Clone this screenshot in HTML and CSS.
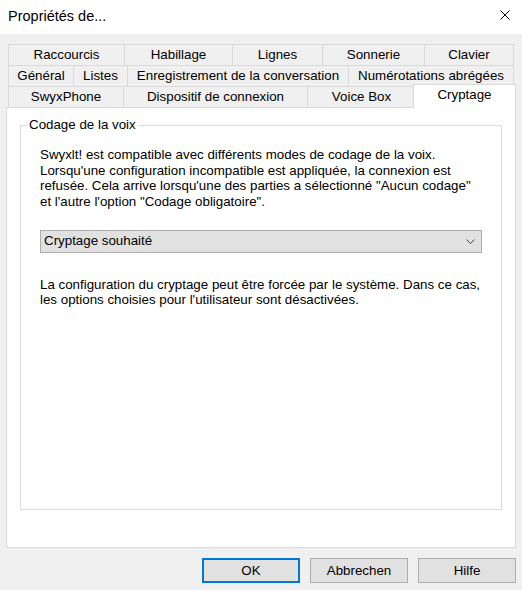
FILE: index.html
```html
<!DOCTYPE html>
<html lang="fr">
<head>
<meta charset="utf-8">
<title>Propriétés de...</title>
<link rel="stylesheet" href="styles.css">
</head>
<body>
<div class="window">
  <div class="titlebar">
    <span class="title">Propriétés de...</span>
    <svg class="close" width="10" height="10" viewBox="0 0 10 10" aria-hidden="true">
      <path d="M0.5 0.5 L9.5 9.5 M9.5 0.5 L0.5 9.5" stroke="#000" stroke-width="1" fill="none"/>
    </svg>
  </div>
  <div class="client">
    <div class="tabs">
      <div class="tab-row row1">
        <div class="tab">Raccourcis</div>
        <div class="tab">Habillage</div>
        <div class="tab">Lignes</div>
        <div class="tab">Sonnerie</div>
        <div class="tab last">Clavier</div>
      </div>
      <div class="tab-row row2">
        <div class="tab">Général</div>
        <div class="tab">Listes</div>
        <div class="tab">Enregistrement de la conversation</div>
        <div class="tab last">Numérotations abrégées</div>
      </div>
      <div class="tab-row row3">
        <div class="tab">SwyxPhone</div>
        <div class="tab">Dispositif de connexion</div>
        <div class="tab">Voice Box</div>
        <div class="tab last selected">Cryptage</div>
      </div>
    </div>
    <div class="panel">
      <fieldset class="group">
        <legend>Codage de la voix</legend>
        <div class="group-body">
          <p class="text">Swyxlt! est compatible avec différents modes de codage de la voix.<br>Lorsqu'une configuration incompatible est appliquée, la connexion est<br>refusée. Cela arrive lorsqu'une des parties a sélectionné "Aucun codage"<br>et l'autre l'option "Codage obligatoire".</p>
          <div class="combo">
            <span class="combo-value">Cryptage souhaité</span>
            <svg class="chevron" width="9" height="5" viewBox="0 0 9 5" aria-hidden="true">
              <path d="M0.5 0.5 L4.5 4.5 L8.5 0.5" stroke="#444" stroke-width="1" fill="none"/>
            </svg>
          </div>
          <p class="text note">La configuration du cryptage peut être forcée par le système. Dans ce cas,<br>les options choisies pour l'utilisateur sont désactivées.</p>
        </div>
      </fieldset>
    </div>
    <div class="buttons">
      <button class="btn default">OK</button>
      <button class="btn">Abbrechen</button>
      <button class="btn">Hilfe</button>
    </div>
  </div>
</div>
</body>
</html>
```
FILE: styles.css
```css
html, body {
  margin: 0;
  padding: 0;
}
body {
  width: 522px;
  height: 590px;
  overflow: hidden;
  font-family: "Liberation Sans", Arial, sans-serif;
  font-size: 13.33px;
  color: #000;
  background: #f0f0f0;
}
.window {
  display: flex;
  flex-direction: column;
  height: 590px;
}
.titlebar {
  height: 34px;
  box-sizing: border-box;
  background: #fff;
  display: flex;
  align-items: flex-start;
  padding: 7px 0 0 8px;
}
.title {
  font-size: 14.5px;
  line-height: 18px;
  color: #000;
}
.close {
  margin-left: auto;
  margin-right: 12px;
  margin-top: 3px;
}
.client {
  flex: 1;
  background: #f0f0f0;
  padding: 10px 6px 0 6px;
}
.tabs {
  margin: 0 2px;
}
.tab-row {
  display: grid;
  height: 21px;
}
.row1 { grid-template-columns: 116px 108px 90px 102px 90px; }
.row2 { grid-template-columns: 65px 54px 221px 166px; }
.row3 { grid-template-columns: 115px 184px 108px 99px; }
.tab {
  border-top: 1px solid #d9d9d9;
  border-left: 1px solid #d9d9d9;
  background: #f0f0f0;
  line-height: 20px;
  height: 21px;
  box-sizing: border-box;
  text-align: center;
  white-space: nowrap;
}
.tab.last {
  border-right: 1px solid #d9d9d9;
}
.tab.selected {
  position: relative;
  z-index: 1;
  background: #fff;
  margin: -2px -2px 0 -2px;
  height: 24px;
  padding-bottom: 3px;
  border-right: 1px solid #d9d9d9;
}
.panel {
  height: 441px;
  box-sizing: border-box;
  background: #fff;
  border: 1px solid #d9d9d9;
  display: flex;
  flex-direction: column;
}
.group {
  flex: 1;
  margin: 9px 13px 37px 13px;
  padding: 0 6px;
  border: 1px solid #dcdcdc;
  min-width: 0;
}
.group legend {
  padding: 0 2px;
  line-height: 16px;
}
.group-body {
  padding: 14px 13px 0 13px;
}
.text {
  margin: 0;
  line-height: 15.67px;
  white-space: nowrap;
}
.combo {
  margin-top: 20px;
  height: 23px;
  box-sizing: border-box;
  background: #e1e1e1;
  border: 1px solid #adadad;
  display: flex;
  align-items: center;
  padding: 0 6px 0 3px;
}
.combo-value {
  flex: 1;
  line-height: 20px;
}
.chevron {
  margin-top: 1px;
}
.note {
  margin-top: 24px;
}
.buttons {
  display: flex;
  justify-content: flex-end;
  gap: 10px;
  margin-top: 10px;
}
.btn {
  width: 98px;
  height: 25px;
  box-sizing: border-box;
  background: #e1e1e1;
  border: 1px solid #adadad;
  font-family: "Liberation Sans", Arial, sans-serif;
  font-size: 13.33px;
  color: #000;
  padding: 0;
}
.btn.default {
  border: 2px solid #0078d7;
}
```
